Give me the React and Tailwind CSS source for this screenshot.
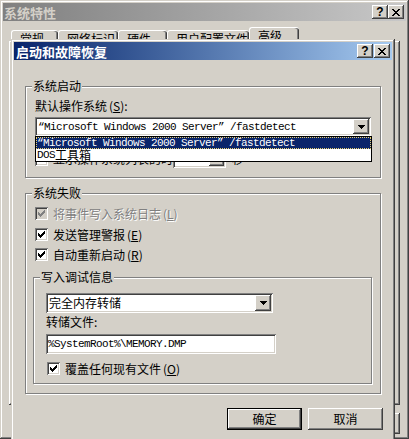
import React from 'react';

// win2000 classic bevels
const RAISED_WIN =
  'shadow-[inset_-1px_-1px_#404040,inset_1px_1px_#d4d0c8,inset_-2px_-2px_#808080,inset_2px_2px_#fff]';
const RAISED_BTN =
  'shadow-[inset_-1px_-1px_#404040,inset_1px_1px_#fff,inset_-2px_-2px_#808080,inset_2px_2px_#d4d0c8]';
const SUNKEN =
  'shadow-[inset_1px_1px_#808080,inset_-1px_-1px_#fff,inset_2px_2px_#404040,inset_-2px_-2px_#d4d0c8]';
const MONO = "font-['Liberation_Mono',monospace] text-[11px] tracking-[-0.6px] leading-[12px]";

function CapButton({ kind }) {
  return (
    <div className={`w-[16px] h-[14px] bg-[#d4d0c8] ${RAISED_BTN} flex items-center justify-center`}>
      {kind === 'help' ? (
        <span className="font-['Liberation_Sans',sans-serif] font-bold text-[12px] leading-[12px] text-black pb-[1px]">
          ?
        </span>
      ) : (
        <svg width="8" height="7" viewBox="0 0 8 7" shapeRendering="crispEdges">
          <path d="M0 0h2v1h1v1h2V1h1V0h2v1H7v1H6v1H5v1h1v1h1v1h1v1H6V6H5V5H3v1H2v1H0V6h1V5h1V4h1V3H2V2H1V1H0z" fill="#000" />
        </svg>
      )}
    </div>
  );
}

function Check({ checked, disabled }) {
  const fill = disabled ? '#808080' : '#000';
  const cols = [2, 3, 4, 3, 2, 1, 0];
  return (
    <span
      className={`relative block w-[13px] h-[13px] shrink-0 ${disabled ? 'bg-[#d4d0c8]' : 'bg-white'} ${SUNKEN}`}
    >
      {checked && (
        <svg className="absolute left-[3px] top-[3px]" width="7" height="7" viewBox="0 0 7 7" shapeRendering="crispEdges">
          {cols.map((y, x) => (
            <rect key={x} x={x} y={y} width="1" height="3" fill={fill} />
          ))}
        </svg>
      )}
    </span>
  );
}

function CheckRow({ checked, disabled, label, hot, className = '' }) {
  return (
    <div className={`flex items-center h-[13px] ${className}`}>
      <Check checked={checked} disabled={disabled} />
      <span
        className={`ml-[5px] text-[12px] leading-[12px] ${
          disabled ? 'text-[#808080] [text-shadow:1px_1px_0_#fff]' : 'text-black'
        }`}
      >
        {label}
        <span className="ml-[2px]">
          (<u>{hot}</u>)
        </span>
      </span>
    </div>
  );
}

function DropButton({ tall }) {
  return (
    <div
      className={`w-[16px] ${tall ? 'h-[16px]' : 'h-[15px]'} mr-[2px] bg-[#d4d0c8] ${RAISED_BTN} flex items-center justify-center`}
    >
      <svg width="7" height="4" viewBox="0 0 7 4" shapeRendering="crispEdges">
        <path d="M0 0h7v1H6v1H5v1H4v1H3V3H2V2H1V1H0z" fill="#000" />
      </svg>
    </div>
  );
}

function GroupBox({ label, className = '', children }) {
  return (
    <div
      className={`relative border border-[#808080] shadow-[1px_1px_0_#fff,inset_1px_1px_0_#fff] ${className}`}
    >
      <span className="absolute -top-[7px] left-[6px] px-[1px] bg-[#d4d0c8] text-[12px] leading-[12px]">
        {label}
      </span>
      {children}
    </div>
  );
}

function PushButton({ children, isDefault }) {
  return (
    <div
      className={`w-[75px] h-[22px] bg-[#d4d0c8] flex items-center justify-center text-[12px] leading-[12px] ${
        isDefault
          ? 'shadow-[inset_0_0_0_1px_#000,inset_-2px_-2px_#404040,inset_2px_2px_#fff,inset_-3px_-3px_#808080]'
          : RAISED_BTN
      }`}
    >
      {children}
    </div>
  );
}

const TABS = [
  { label: '常规', w: 'w-[47px]' },
  { label: '网络标识', w: 'w-[60px]' },
  { label: '硬件', w: 'w-[49px]' },
  { label: '用户配置文件', w: 'w-[82px]' },
  { label: '高级', w: 'w-[50px]', active: true },
];

function StartupDialog() {
  return (
    <div
      className={`absolute left-[11px] top-[39px] w-[384px] h-[410px] bg-[#d4d0c8] p-[3px] ${RAISED_WIN} flex flex-col`}
    >
      <div className="h-[18px] shrink-0 flex items-center justify-between bg-linear-to-r from-[#0a246a] to-[#a6caf0] pl-[2px] pr-[2px]">
        <span className="text-white font-bold text-[13px] leading-[13px]">启动和故障恢复</span>
        <div className="flex gap-[1px]">
          <CapButton kind="help" />
          <CapButton kind="close" />
        </div>
      </div>

      <div className="flex flex-col px-[11px] pt-[26px]">
        <GroupBox label="系统启动" className="h-[92px] pt-[13px] pl-[9px]">
          <div className="text-[12px] leading-[12px]">
            默认操作系统<span className="ml-[2px]">(<u>S</u>):</span>
          </div>
          <div className={`relative mt-[5px] w-[336px] h-[19px] bg-white ${SUNKEN} flex items-center`}>
            <div className={`flex-1 pl-[3px] ${MONO}`}>“Microsoft Windows 2000 Server” /fastdetect</div>
            <DropButton />
            <div className="absolute top-full left-0 w-[337px] border border-black bg-white z-10">
              <div className={`h-[12px] bg-[#0a246a] text-white pl-[1px] outline-1 outline-dotted outline-[#e8d070] -outline-offset-1 ${MONO}`}>
                “Microsoft Windows 2000 Server” /fastdetect
              </div>
              <div className="h-[12px] pl-[1px] flex items-center">
                <span className={MONO}>DOS</span>
                <span className="text-[12px] leading-[12px]">工具箱</span>
              </div>
            </div>
          </div>
          <div className="mt-[14px] h-[18px] flex items-center">
            <Check />
            <span className="ml-[5px] w-[120px] overflow-hidden whitespace-nowrap text-[12px] leading-[12px]">
              显示操作系统列表的时间(T):
            </span>
            <div className={`w-[53px] h-[18px] bg-white ${SUNKEN} flex items-center justify-end`}>
              <div className={`w-[15px] h-[14px] mr-[2px] bg-[#d4d0c8] ${RAISED_BTN}`} />
            </div>
            <span className="ml-[6px] text-[12px] leading-[12px]">秒</span>
          </div>
        </GroupBox>

        <GroupBox label="系统失败" className="mt-[15px] h-[201px] pt-[13px] pl-[9px]">
          <CheckRow checked disabled label="将事件写入系统日志" hot="L" />
          <CheckRow checked label="发送管理警报" hot="E" className="mt-[8px]" />
          <CheckRow checked label="自动重新启动" hot="R" className="mt-[7px]" />

          <GroupBox label="写入调试信息" className="mt-[16px] -ml-[2px] w-[339px] h-[107px] pt-[15px] pl-[12px]">
            <div className={`w-[227px] h-[20px] bg-white ${SUNKEN} flex items-center`}>
              <div className="flex-1 pl-[3px] text-[12px] leading-[12px]">完全内存转储</div>
              <DropButton tall />
            </div>
            <div className="mt-[3px] text-[12px] leading-[12px]">转储文件:</div>
            <div className={`mt-[6px] w-[230px] h-[20px] bg-white ${SUNKEN} flex items-center pl-[2px]`}>
              <span className={MONO}>%SystemRoot%\MEMORY.DMP</span>
            </div>
            <CheckRow checked label="覆盖任何现有文件" hot="O" className="mt-[8px] ml-[1px]" />
          </GroupBox>
        </GroupBox>

        <div className="mt-[14px] -mr-[2px] flex justify-end gap-[6px]">
          <PushButton isDefault>确定</PushButton>
          <PushButton>取消</PushButton>
        </div>
      </div>
    </div>
  );
}

export default function App() {
  return (
    <div className="relative w-[409px] h-[439px] overflow-hidden bg-[#d4d0c8] text-black font-['Noto_Sans_CJK_SC',sans-serif]">
      <div className={`w-[409px] h-[439px] p-[3px] ${RAISED_WIN} flex flex-col`}>
        <div className="h-[18px] shrink-0 flex items-center justify-between bg-linear-to-r from-[#808080] to-[#c8c8c8] pl-[1px] pr-[2px]">
          <span className="text-[#d4d0c8] font-bold text-[13px] leading-[13px]">系统特性</span>
          <div className="flex">
            <CapButton kind="help" />
            <CapButton kind="close" />
          </div>
        </div>

        <div className="flex flex-col px-[6px] pt-[6px]">
          <div className="flex items-end h-[14px] pl-[2px]">
            {TABS.map((t) => (
              <div
                key={t.label}
                className={`${t.w} ${t.active ? 'h-[14px]' : 'h-[11px]'} rounded-t-[3px] border-t border-l border-white shadow-[inset_-1px_0_#404040,inset_-2px_0_#808080] pl-[8px] pt-[2px] text-[12px] leading-[12px] overflow-hidden whitespace-nowrap`}
              >
                {t.label}
              </div>
            ))}
          </div>
          <div className="h-[364px] shadow-[inset_-1px_-1px_#404040,inset_1px_1px_#fff,inset_-2px_-2px_#808080]" />
          <div className="mt-[8px] flex justify-end">
            {/* only the right edge of the outer window's button shows behind the dialog */}
            <div className={`w-[75px] h-[21px] bg-[#d4d0c8] ${RAISED_BTN}`} />
          </div>
        </div>
      </div>

      <StartupDialog />
    </div>
  );
}
